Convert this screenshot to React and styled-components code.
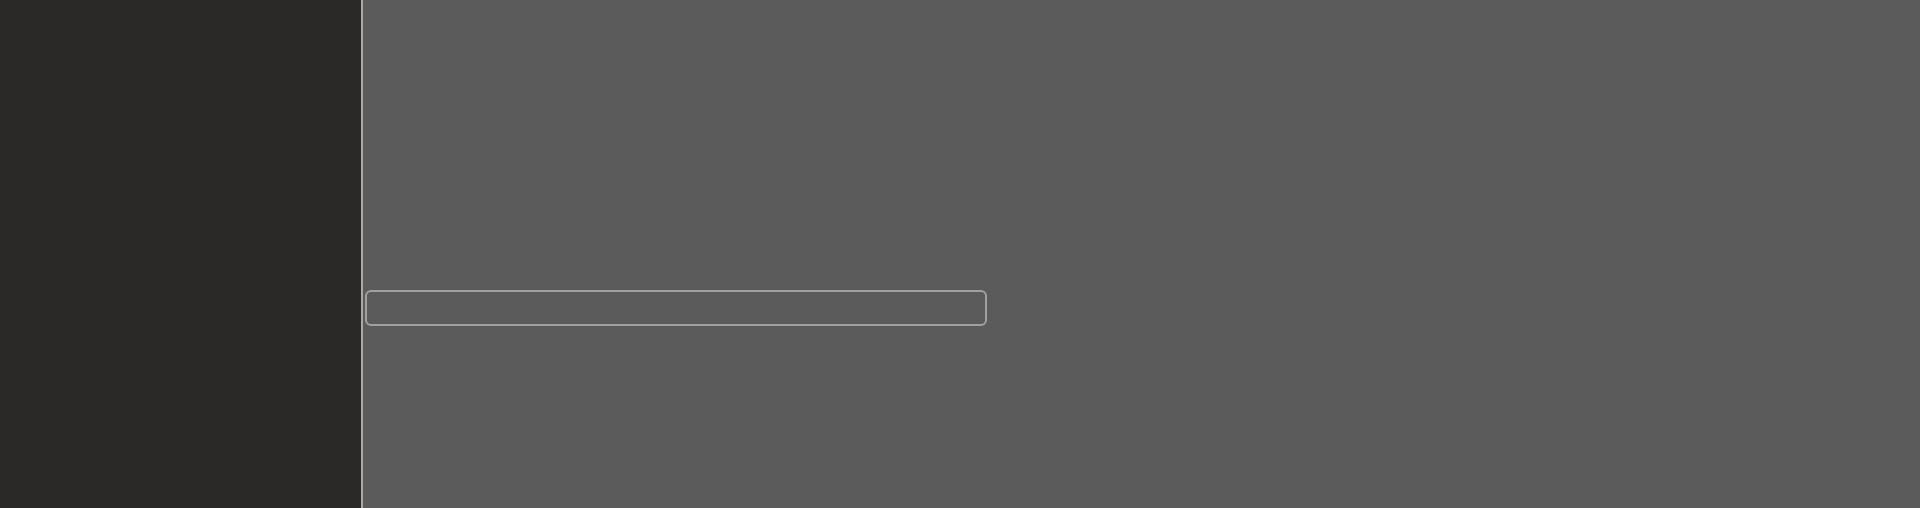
import React from "react";
import styled, { createGlobalStyle } from "styled-components";

const Global = createGlobalStyle`
  html, body { margin: 0; padding: 0; height: 100%; background: #5b5b5b; }
  #root { height: 100%; }
  * { box-sizing: border-box; }
`;

const Layout = styled.div`
  display: flex;
  height: 508px;
  width: 1920px;
  font-family: "Liberation Sans", Arial, sans-serif;
`;

const Sidebar = styled.aside`
  width: 361px;
  flex: none;
  background: #2a2927;
`;

const Main = styled.main`
  flex: 1;
  background: #5b5b5b;
  border-left: 2px solid #a8a8a8;
  padding: 290px 0 0 2px;
`;

const Field = styled.input`
  display: block;
  width: 622px;
  height: 36px;
  background: transparent;
  border: 2px solid #a0a0a0;
  border-radius: 6px;
  outline: none;
  color: #eee;
  font: 14px "Liberation Sans", Arial, sans-serif;
  padding: 0 8px;
`;

export default function App() {
  return (
    <>
      <Global />
      <Layout>
        <Sidebar />
        <Main>
          <Field type="text" />
        </Main>
      </Layout>
    </>
  );
}
